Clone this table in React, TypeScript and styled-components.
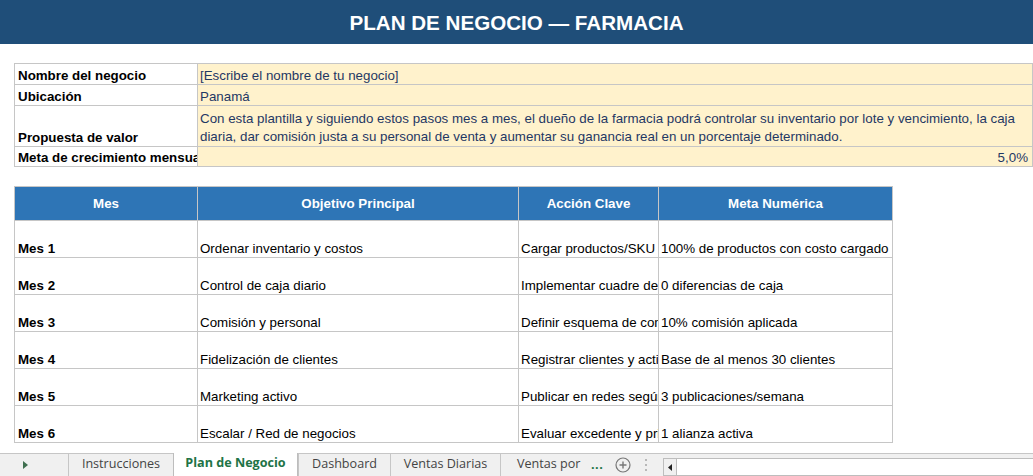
import React from "react";
import styled, { createGlobalStyle } from "styled-components";

const Global = createGlobalStyle`
  html, body { margin: 0; padding: 0; background: #ffffff; }
  body { font-family: "Liberation Sans", Arial, sans-serif; font-size: 13.33px; color: #000; }
  * { box-sizing: border-box; }
`;

const Page = styled.div`
  height: 100vh;
  display: flex;
  flex-direction: column;
  overflow: hidden;
`;

const TitleBar = styled.header`
  height: 44px;
  flex: 0 0 44px;
  background: #1f4e79;
  color: #ffffff;
  display: flex;
  align-items: center;
  justify-content: center;
  font-weight: bold;
  font-size: 20.6px;
  padding-top: 1px;
`;

const Content = styled.main`
  padding: 19px 1px 0 14px;
  display: flex;
  flex-direction: column;
  gap: 19px;
`;

const Sheet = styled.table<{ $width: number }>`
  border-collapse: collapse;
  table-layout: fixed;
  width: ${(p) => p.$width}px;
  td, th {
    border: 1px solid #c6c6c6;
    overflow: hidden;
    white-space: nowrap;
    padding: 0 2px 0 2px;
    line-height: 16px;
  }
`;

const Row = styled.tr<{ $h: number }>`
  height: ${(p) => p.$h}px;
`;

const LabelCell = styled.td`
  font-weight: bold;
  vertical-align: bottom;
  padding-left: 3px !important;
`;

const ValueCell = styled.td<{ $wrap?: boolean; $right?: boolean }>`
  background: #fff2cc;
  color: #1f3864;
  vertical-align: bottom;
  text-align: ${(p) => (p.$right ? "right" : "left")};
  white-space: ${(p) => (p.$wrap ? "normal" : "nowrap")} !important;
  line-height: ${(p) => (p.$wrap ? "18px" : "16px")} !important;
  padding-right: 4px !important;
`;

const HeadCell = styled.th`
  background: #2e75b6;
  color: #ffffff;
  font-weight: bold;
  text-align: center;
  vertical-align: middle;
  padding: 0 !important;
`;

const MonthCell = styled.td`
  font-weight: bold;
  vertical-align: bottom;
  padding-left: 3px !important;
`;

const TextCell = styled.td`
  vertical-align: bottom;
  text-overflow: clip;
`;

const TabBar = styled.footer`
  margin-top: auto;
  height: 23px;
  flex: 0 0 23px;
  background: #f0f0f0;
  border-top: 1px solid #c6c6c6;
  display: flex;
  align-items: stretch;
  font-family: "Segoe UI", "Open Sans", "Noto Sans", sans-serif;
  font-size: 12.6px;
  color: #444444;
`;

const NavArea = styled.div`
  width: 68px;
  display: flex;
  align-items: center;
  justify-content: center;
  padding-right: 18px;
  color: #3f6f4f;
`;

const Tab = styled.div<{ $active?: boolean; $w: number; $start?: boolean }>`
  width: ${(p) => p.$w}px;
  display: flex;
  align-items: center;
  justify-content: ${(p) => (p.$start ? "flex-start" : "center")};
  padding-left: ${(p) => (p.$start ? "16px" : "0")};
  border-left: 1px solid ${(p) => (p.$active ? "#bdbdbd" : "#c6c6c6")};
  ${(p) => (p.$active ? "border-right: 1px solid #bdbdbd;" : "")}
  background: ${(p) => (p.$active ? "#ffffff" : "transparent")};
  margin-top: ${(p) => (p.$active ? "-1px" : "0")};
  color: ${(p) => (p.$active ? "#217346" : "#444444")};
  font-weight: ${(p) => (p.$active ? 700 : 400)};
  white-space: nowrap;
  padding-bottom: 2px;
  line-height: 1;
`;

const Ellipsis = styled.div`
  display: flex;
  align-items: center;
  color: #217346;
  font-weight: bold;
  padding: 0 0 2px 13px;
  letter-spacing: 0.5px;
`;

const IconSlot = styled.div`
  display: flex;
  align-items: center;
  padding-left: 12px;
  color: #777;
`;

const Dots = styled.div`
  display: flex;
  align-items: center;
  padding-left: 14px;
  color: #b8b8b8;
`;

const Scroll = styled.div`
  flex: 1;
  margin: 4px 0 0 16px;
  border: 1px solid #bdbdbd;
  border-right: none;
  background: #ffffff;
  display: flex;
`;

const ScrollBtn = styled.div`
  width: 13px;
  border-right: 1px solid #bdbdbd;
  background: #f0f0f0;
  display: flex;
  align-items: center;
  justify-content: center;
`;

const months = [
  ["Mes 1", "Ordenar inventario y costos", "Cargar productos/SKU con costo", "100% de productos con costo cargado"],
  ["Mes 2", "Control de caja diario", "Implementar cuadre de caja", "0 diferencias de caja"],
  ["Mes 3", "Comisión y personal", "Definir esquema de comisión", "10% comisión aplicada"],
  ["Mes 4", "Fidelización de clientes", "Registrar clientes y activar", "Base de al menos 30 clientes"],
  ["Mes 5", "Marketing activo", "Publicar en redes según plan", "3 publicaciones/semana"],
  ["Mes 6", "Escalar / Red de negocios", "Evaluar excedente y priorizar", "1 alianza activa"],
];

export default function App() {
  return (
    <Page>
      <Global />
      <TitleBar>PLAN DE NEGOCIO — FARMACIA</TitleBar>
      <Content>
        <Sheet $width={1019}>
          <colgroup>
            <col style={{ width: 183 }} />
            <col />
          </colgroup>
          <tbody>
            <Row $h={21}>
              <LabelCell>Nombre del negocio</LabelCell>
              <ValueCell>[Escribe el nombre de tu negocio]</ValueCell>
            </Row>
            <Row $h={21}>
              <LabelCell>Ubicación</LabelCell>
              <ValueCell>Panamá</ValueCell>
            </Row>
            <Row $h={41}>
              <LabelCell>Propuesta de valor</LabelCell>
              <ValueCell $wrap>
                Con esta plantilla y siguiendo estos pasos mes a mes, el dueño de la farmacia podrá controlar su inventario por lote y vencimiento, la caja diaria, dar comisión justa a su personal de venta y aumentar su ganancia real en un porcentaje determinado.
              </ValueCell>
            </Row>
            <Row $h={20}>
              <LabelCell>Meta de crecimiento mensual</LabelCell>
              <ValueCell $right>5,0%</ValueCell>
            </Row>
          </tbody>
        </Sheet>
        <Sheet $width={878}>
          <colgroup>
            <col style={{ width: 183 }} />
            <col style={{ width: 321 }} />
            <col style={{ width: 140 }} />
            <col style={{ width: 234 }} />
          </colgroup>
          <thead>
            <Row $h={34}>
              <HeadCell>Mes</HeadCell>
              <HeadCell>Objetivo Principal</HeadCell>
              <HeadCell>Acción Clave</HeadCell>
              <HeadCell>Meta Numérica</HeadCell>
            </Row>
          </thead>
          <tbody>
            {months.map((m) => (
              <Row $h={37} key={m[0]}>
                <MonthCell>{m[0]}</MonthCell>
                <TextCell>{m[1]}</TextCell>
                <TextCell>{m[2]}</TextCell>
                <TextCell>{m[3]}</TextCell>
              </Row>
            ))}
          </tbody>
        </Sheet>
      </Content>
      <TabBar>
        <NavArea>
          <svg width="5" height="8" viewBox="0 0 5 8">
            <path d="M0 0 L5 4 L0 8 Z" fill="currentColor" />
          </svg>
        </NavArea>
        <Tab $w={105}>Instrucciones</Tab>
        <Tab $w={125} $active>Plan de Negocio</Tab>
        <Tab $w={92}>Dashboard</Tab>
        <Tab $w={110}>Ventas Diarias</Tab>
        <Tab $w={78} $start>Ventas por</Tab>
        <Ellipsis>...</Ellipsis>
        <IconSlot>
          <svg width="16" height="16" viewBox="0 0 16 16">
            <circle cx="8" cy="8" r="7" fill="none" stroke="currentColor" strokeWidth="1.2" />
            <path d="M8 4.5 V11.5 M4.5 8 H11.5" stroke="currentColor" strokeWidth="1.4" />
          </svg>
        </IconSlot>
        <Dots>
          <svg width="2" height="12" viewBox="0 0 2 12">
            <rect x="0" y="0" width="2" height="2" fill="currentColor" />
            <rect x="0" y="5" width="2" height="2" fill="currentColor" />
            <rect x="0" y="10" width="2" height="2" fill="currentColor" />
          </svg>
        </Dots>
        <Scroll>
          <ScrollBtn>
            <svg width="4" height="7" viewBox="0 0 4 7">
              <path d="M4 0 L0 3.5 L4 7 Z" fill="#222" />
            </svg>
          </ScrollBtn>
        </Scroll>
      </TabBar>
    </Page>
  );
}
